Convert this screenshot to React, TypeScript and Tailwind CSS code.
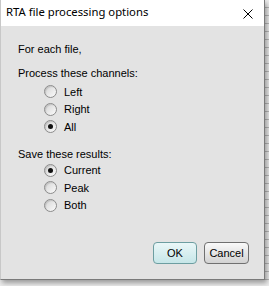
import React from "react";

function Radio({ label, checked }: { label: string; checked?: boolean }) {
  return (
    <div className="flex h-[17.5px] items-center">
      <span className="ml-[26px] flex h-[13px] w-[13px] items-center justify-center rounded-full border border-[#8c8c8c] bg-gradient-to-br from-[#d4d4d4] to-[#fbfbfb] shadow-[inset_1px_1px_1px_rgba(0,0,0,0.12)]">
        {checked && <span className="h-[5px] w-[5px] rounded-full bg-[#111]" />}
      </span>
      <span className="ml-[7px]">{label}</span>
    </div>
  );
}

export default function App() {
  return (
    <div
      className="relative h-[286px] w-[269px] overflow-hidden bg-[#ececec]"
      style={{
        backgroundImage:
          "repeating-linear-gradient(to bottom, transparent 0 7px, #b8b8b8 7px 8px)",
      }}
    >
      <div className="flex h-[280px] w-[265px] flex-col border-l border-r border-b border-[#7a7a7a] border-l-[#c8c8c8] bg-[#e3e3e3] shadow-[2px_3px_5px_rgba(0,0,0,0.35)]">
        <div className="flex h-[26px] items-center justify-between bg-white pl-[5px] pr-[11px] font-['Noto_Sans',sans-serif] text-[11.3px] text-black">
          <span className="pb-[1px]">RTA file processing options</span>
          <svg width="10" height="10" viewBox="0 0 10 10" className="mt-[1px]">
            <path d="M0.5 0.5 L9.5 9.5 M9.5 0.5 L0.5 9.5" stroke="#000" strokeWidth="1" />
          </svg>
        </div>
        <div className="flex flex-1 flex-col pl-[17px] pt-[15px] font-['Liberation_Sans',Arial,sans-serif] text-[11px] text-black">
          <div className="leading-[16px]">For each file,</div>
          <div className="mt-[8px] leading-[16px]">Process these channels:</div>
          <div className="mt-[2px] flex flex-col">
            <Radio label="Left" />
            <Radio label="Right" />
            <Radio label="All" checked />
          </div>
          <div className="mt-[10px] leading-[16px]">Save these results:</div>
          <div className="flex flex-col">
            <Radio label="Current" checked />
            <Radio label="Peak" />
            <Radio label="Both" />
          </div>
          <div className="mt-auto mb-[15px] mr-[15px] flex justify-end gap-[7px]">
            <button className="h-[22px] w-[44px] rounded-[4px] border border-[#6d9ea1] bg-gradient-to-b from-[#eaf7f8] to-[#c6e6e8] text-[11px]">
              OK
            </button>
            <button className="h-[22px] w-[45px] rounded-[4px] border border-[#707070] bg-gradient-to-b from-[#fafafa] to-[#d2d2d2] text-[11px]">
              Cancel
            </button>
          </div>
        </div>
      </div>
    </div>
  );
}
